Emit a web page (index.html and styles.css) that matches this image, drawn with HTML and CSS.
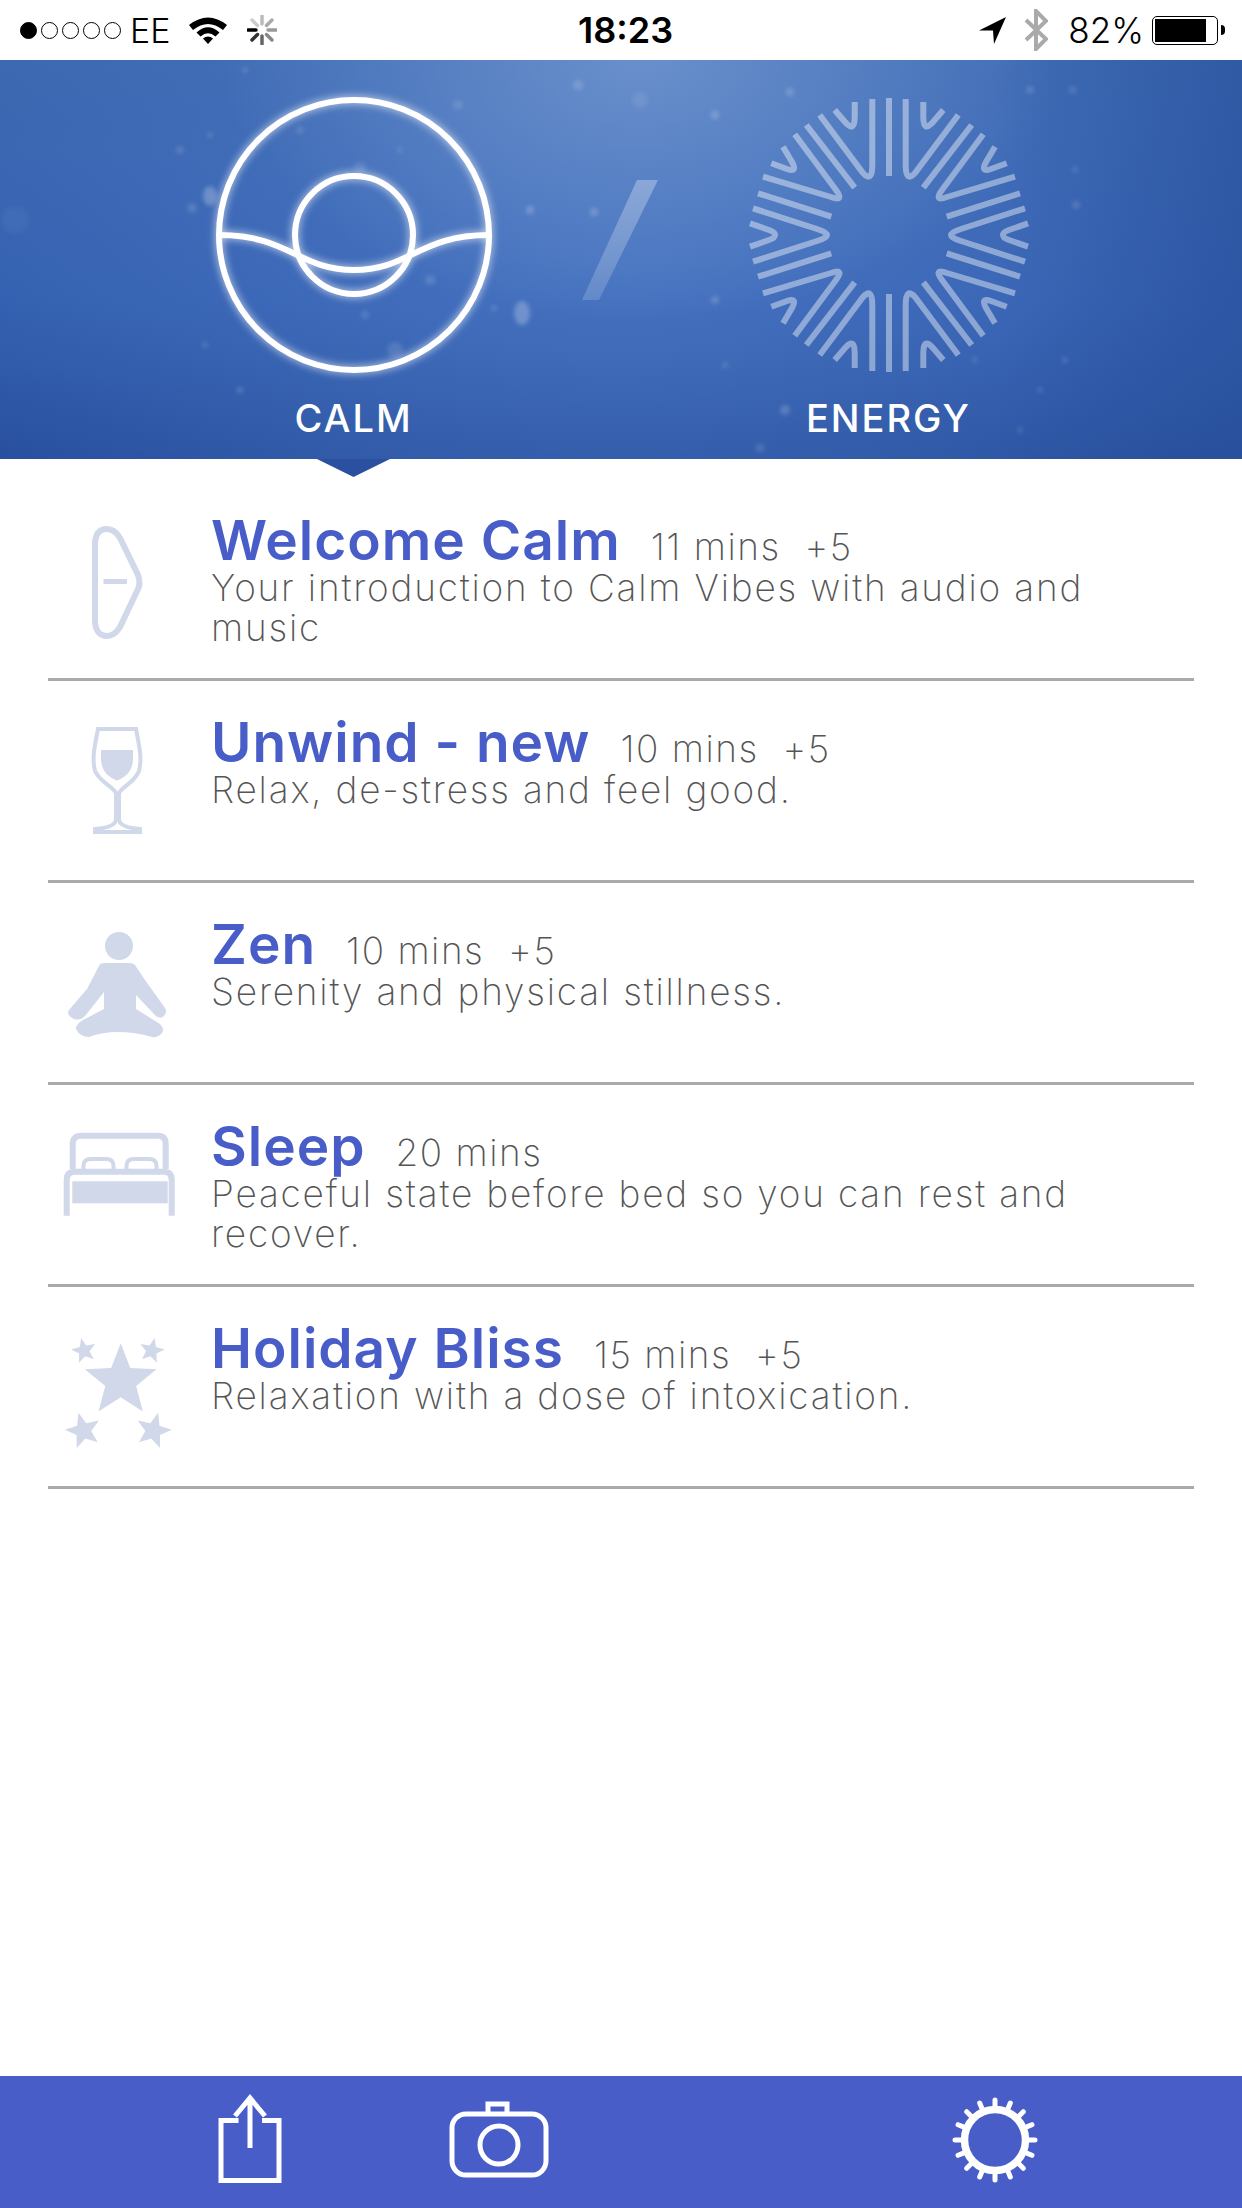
FILE: index.html
```html
<!DOCTYPE html>
<html lang="en">
<head>
    <meta charset="UTF-8">
    <title>Vibes</title>
    <link rel="stylesheet" href="styles.css">
</head>
<body>
<div class="page">
    <div class="status">
        <div class="status-left">
            <span class="dots"><i class="on"></i><i></i><i></i><i></i><i></i></span>
            <span class="carrier">EE</span>
            <svg class="wifi" width="38" height="28" viewBox="0 0 38 28">
                <path d="M0 9 Q19 -6 38 9 L34 14 Q19 2 4 14 Z" />
                <path d="M7.500 16.500 Q19 6 30.500 16.500 L26.500 20.500 Q19 14 11.500 20.500 Z" />
                <path d="M14 22.500 Q19 18.500 24 22.500 L19 28 Z" />
            </svg>
            <svg class="spinner" width="30" height="30" viewBox="-15 -15 30 30">
                <path d="M0 -14V-6" stroke="#bbb" />
                <path d="M10 -10L4.500 -4.500" stroke="#aaa" />
                <path d="M14 0H6" stroke="#999" />
                <path d="M10 10L4.500 4.500" stroke="#888" />
                <path d="M0 14V6" stroke="#666" />
                <path d="M-10 10L-4.500 4.500" stroke="#333" />
                <path d="M-14 0H-6" stroke="#000" />
                <path d="M-10 -10L-4.500 -4.500" stroke="#ccc" />
            </svg>
        </div>
        <div class="clock">18:23</div>
        <div class="status-right">
            <svg class="arrow-loc" width="28" height="27" viewBox="0 0 28 27"><path d="M27 0 L0 13.500 L14 13.500 L15 27 Z" /></svg>
            <svg class="bluetooth" width="24" height="42" viewBox="0 0 24 42"><path d="M2 11 L22 30 L12 40 V2 L22 12 L2 31" /></svg>
            <span class="percent">82%</span>
            <span class="battery"><span class="battery-fill"></span></span>
            <span class="battery-nub"></span>
        </div>
    </div>

    <header class="hero">
        <svg class="specks" width="1242" height="400" viewBox="0 0 1242 400">
            <g fill="#fff">
                <circle cx="180" cy="90" r="4" opacity=".14" /><circle cx="192" cy="148" r="5" opacity=".14" />
                <circle cx="210" cy="75" r="3" opacity=".14" /><circle cx="245" cy="10" r="3" opacity=".14" />
                <ellipse cx="210" cy="136" rx="7" ry="10" opacity=".25" /><circle cx="300" cy="70" r="4" opacity=".12" />
                <circle cx="360" cy="108" r="6" opacity=".12" /><circle cx="400" cy="90" r="3" opacity=".12" />
                <circle cx="205" cy="285" r="3" opacity=".14" /><circle cx="240" cy="330" r="3" opacity=".18" />
                <circle cx="270" cy="275" r="3" opacity=".14" /><circle cx="395" cy="290" r="8" opacity=".12" />
                <circle cx="365" cy="255" r="4" opacity=".12" /><circle cx="430" cy="220" r="5" opacity=".14" />
                <ellipse cx="522" cy="253" rx="8" ry="12" opacity=".25" />
                <circle cx="530" cy="150" r="4" opacity=".22" />
                <circle cx="494" cy="248" r="3" opacity=".14" /><circle cx="578" cy="25" r="5" opacity=".16" />
                <circle cx="458" cy="45" r="5" opacity=".12" /><circle cx="594" cy="152" r="4" opacity=".2" />
                <circle cx="640" cy="40" r="8" opacity=".08" /><circle cx="790" cy="32" r="4" opacity=".18" />
                <circle cx="715" cy="55" r="4" opacity=".2" /><circle cx="715" cy="240" r="4" opacity=".18" />
                <circle cx="725" cy="305" r="3" opacity=".14" />
                <circle cx="785" cy="350" r="5" opacity=".18" /><circle cx="760" cy="388" r="4" opacity=".14" />
                <circle cx="1030" cy="30" r="4" opacity=".14" /><circle cx="1073" cy="30" r="4" opacity=".12" />
                <circle cx="1075" cy="110" r="3" opacity=".14" /><circle cx="1076" cy="145" r="4" opacity=".14" />
                <circle cx="1065" cy="300" r="3" opacity=".14" /><circle cx="1040" cy="330" r="3" opacity=".12" />
                <circle cx="975" cy="300" r="3" opacity=".12" /><circle cx="1020" cy="370" r="3" opacity=".12" />
                <circle cx="15" cy="160" r="14" opacity=".04" />
            </g>
        </svg>
        <svg class="slash" width="80" height="124" viewBox="0 0 80 124">
            <defs>
                <linearGradient id="slash-fade" x1="0" y1="1" x2="0" y2="0">
                    <stop offset="0" stop-color="#fff" stop-opacity=".16" />
                    <stop offset="1" stop-color="#fff" stop-opacity=".3" />
                </linearGradient>
            </defs>
            <path d="M2 122 L57 2 H78 L19 122 Z" fill="url(#slash-fade)" />
        </svg>
        <div class="tab">
            <svg class="calm-icon" width="290" height="290" viewBox="-145 -145 290 290">
                <circle cx="0" cy="0" r="135" />
                <circle cx="0" cy="0" r="59" />
                <path d="M-135 0 C-65 0 -55 35 0 35 C55 35 65 0 135 0" />
            </svg>
            <div class="tab-label">CALM</div>
        </div>
        <div class="tab">
            <svg class="energy-icon" width="290" height="290" viewBox="-145 -145 290 290">
                <defs>
                    <g id="energy-part">
                        <path d="M-16.700 -136 V-70 Q-16.700 -52 -26 -62 L-69.300 -120" />
                        <path d="M-82.700 -110 L-34.300 -47.300" />
                        <path d="M-94.300 -100.700 L-53 -45 Q-44 -33 -58 -38 L-126 -58.300" />
                        <path d="M-34.300 -133 V-118 Q-34.300 -102 -44 -113 L-54.300 -125" />
                        <path d="M-106 -88.300 L-97 -73 Q-91 -62 -102 -66 L-117.700 -71.700" />
                        <path d="M-57.700 -18.300 L-131 -41.700" />
                        <path d="M-136 -26.700 L-72 -6 Q-62 -3 -62 0" />
                        <path d="M-139 -11.700 L-120 -5 Q-114 -3 -114 0" />
                    </g>
                </defs>
                <path d="M0 -137 V-59 M0 137 V59" />
                <use href="#energy-part" />
                <use href="#energy-part" transform="scale(-1 1)" />
                <use href="#energy-part" transform="scale(1 -1)" />
                <use href="#energy-part" transform="scale(-1 -1)" />
            </svg>
            <div class="tab-label">ENERGY</div>
        </div>
        <span class="pointer"></span>
    </header>

    <main class="list">
        <div class="row">
            <svg class="row-icon" width="130" height="120" viewBox="0 0 130 120">
                <path class="line" d="M45 20 C45 8 50 4 57 4 C63 4 67 8 70 13 L88 50 Q91 58 88 64 L70 102 C67 107 63 111 57 111 C50 111 45 106 45 95 Z" />
                <rect class="solid" x="53.500" y="54" width="23.500" height="5" />
            </svg>
            <div class="row-text">
                <div class="row-head"><span class="row-title">Welcome Calm</span><span class="row-meta">11 mins&nbsp; +5</span></div>
                <p class="row-desc">Your introduction to Calm Vibes with audio and music</p>
            </div>
        </div>
        <div class="row">
            <svg class="row-icon" width="130" height="120" viewBox="0 0 130 120">
                <path class="line thin" d="M48 2 H86 C90 22 92 32 89 44 C85 55 73 59 69 66 V92 C69 98 78 101 90 102 V105 H45 V102 C57 101 66 98 66 92 V66 C62 59 50 55 45 44 C42 32 44 22 48 2 Z" />
                <path class="solid" d="M51 23 H83 V31 C83 44 76 50 67 53.500 C58 50 51 44 51 31 Z" />
            </svg>
            <div class="row-text">
                <div class="row-head"><span class="row-title">Unwind - new</span><span class="row-meta">10 mins&nbsp; +5</span></div>
                <p class="row-desc">Relax, de-stress and feel good.</p>
            </div>
        </div>
        <div class="row">
            <svg class="row-icon" width="130" height="120" viewBox="0 0 130 120">
                <circle class="solid" cx="69" cy="17" r="14" />
                <path class="solid" d="M50 35 Q52 34 56 34 H79 Q83 34 85 36 L95 51 L115 79 Q118 84 113 88 Q108 90 104 85 L86 66 V80 L110 95 Q115 100 112 104 Q108 109 102 108 Q85 103 68 103 Q52 103 39 108 Q30 108 26 100 Q25 96 33 91 L54 80 V63 L35 87 Q30 92 24 90 Q16 86 19 81 L37 60 Z" />
            </svg>
            <div class="row-text">
                <div class="row-head"><span class="row-title">Zen</span><span class="row-meta">10 mins&nbsp; +5</span></div>
                <p class="row-desc">Serenity and physical stillness.</p>
            </div>
        </div>
        <div class="row">
            <svg class="row-icon" width="130" height="120" viewBox="0 0 130 120">
                <path class="line" d="M22.700 38 V13 Q22.700 4.700 31 4.700 H107.700 Q115.700 4.700 115.700 13 V38" />
                <path class="line thin" d="M33.500 38 V35 Q33.500 28 41 28 H56 Q63.500 28 63.500 35 V38 M76.500 38 V35 Q76.500 28 84 28 H99 Q106.500 28 106.500 35 V38" />
                <path class="line" d="M16.700 84.700 V49 Q16.700 40.700 25 40.700 H113.700 Q121.700 40.700 121.700 49 V84.700" />
                <rect class="solid" x="22.300" y="50.300" width="95.400" height="22" />
            </svg>
            <div class="row-text">
                <div class="row-head"><span class="row-title">Sleep</span><span class="row-meta">20 mins</span></div>
                <p class="row-desc">Peaceful state before bed so you can rest and recover.</p>
            </div>
        </div>
        <div class="row">
            <svg class="row-icon" width="130" height="120" viewBox="0 0 130 120">
                <defs>
                    <path id="star" d="M0 -10 L2.530 -3.480 L9.510 -3.090 L4.090 1.330 L5.880 8.090 L0 4.300 L-5.880 8.090 L-4.090 1.330 L-9.510 -3.090 L-2.530 -3.480 Z" />
                </defs>
                <use class="solid" href="#star" transform="translate(70.700 48) scale(3.770)" />
                <use class="solid" href="#star" transform="translate(34 17.700) rotate(-13) scale(1.300)" />
                <use class="solid" href="#star" transform="translate(101.700 17.700) rotate(13) scale(1.300)" />
                <use class="solid" href="#star" transform="translate(33.300 97.700) rotate(-15) scale(1.850)" />
                <use class="solid" href="#star" transform="translate(103.300 97.700) rotate(15) scale(1.850)" />
            </svg>
            <div class="row-text">
                <div class="row-head"><span class="row-title">Holiday Bliss</span><span class="row-meta">15 mins&nbsp; +5</span></div>
                <p class="row-desc">Relaxation with a dose of intoxication.</p>
            </div>
        </div>
    </main>

    <nav class="toolbar">
        <svg class="share" width="70" height="96" viewBox="0 0 70 96">
            <path d="M23.500 28.500 H6 V88.500 H64 V28.500 H47" />
            <path d="M35 56 V8 M20 24 L35 6 L50 24" />
        </svg>
        <svg class="camera" width="104" height="84" viewBox="0 0 104 84">
            <path d="M41 16 V6 H60 V16" />
            <rect x="5" y="16" width="94" height="61" rx="14" />
            <circle cx="52" cy="47" r="19" />
        </svg>
        <svg class="gear" width="90" height="90" viewBox="-45 -45 90 90">
            <defs>
                <path id="gear-tooth" d="M0 -40 V-33 M0 33 V40" />
            </defs>
            <circle class="gear-ring" cx="0" cy="0" r="30.500" />
            <g class="gear-teeth">
                <use href="#gear-tooth" />
                <use href="#gear-tooth" transform="rotate(22.500)" />
                <use href="#gear-tooth" transform="rotate(45)" />
                <use href="#gear-tooth" transform="rotate(67.500)" />
                <use href="#gear-tooth" transform="rotate(90)" />
                <use href="#gear-tooth" transform="rotate(112.500)" />
                <use href="#gear-tooth" transform="rotate(135)" />
                <use href="#gear-tooth" transform="rotate(157.500)" />
            </g>
        </svg>
    </nav>
</div>
</body>
</html>
```
FILE: styles.css
```css
* {
    box-sizing: border-box;
}

html, body {
    margin: 0;
    padding: 0;
    background: #fff;
}

.page {
    width: 1242px;
    height: 2208px;
    display: flex;
    flex-direction: column;
    overflow: hidden;
    font-family: Inter, "Noto Sans", sans-serif;
}

/* status bar */
.status {
    height: 60px;
    flex: none;
    display: grid;
    grid-template-columns: 1fr auto 1fr;
    align-items: center;
    padding: 0 17px 0 20px;
    color: #000;
}

.status-left, .status-right {
    display: flex;
    align-items: center;
}

.status-right {
    justify-content: flex-end;
}

.dots {
    display: flex;
    gap: 4px;
}

.dots i {
    width: 17px;
    height: 17px;
    border: 1.5px solid #000;
    border-radius: 50%;
}

.dots i.on {
    background: #000;
}

.carrier {
    font-size: 34px;
    font-weight: 300;
    margin-left: 9px;
}

.wifi {
    margin-left: 19px;
}

.spinner {
    margin-left: 20px;
    fill: none;
    stroke-width: 3.5;
    stroke-linecap: round;
}

.clock {
    font-size: 36px;
    font-weight: 600;
    margin-left: 6px;
}

.bluetooth {
    margin-left: 17px;
    fill: none;
    stroke: #aaa;
    stroke-width: 4;
}

.percent {
    font-size: 35px;
    font-weight: 300;
    margin-left: 20px;
}

.battery {
    width: 66px;
    height: 29px;
    margin-left: 8px;
    padding: 2px;
    border: 1.5px solid #000;
    border-radius: 5px;
}

.battery-fill {
    display: block;
    width: 51px;
    height: 100%;
    background: #000;
}

.battery-nub {
    width: 4px;
    height: 10px;
    margin-left: 3px;
    background: #000;
    border-radius: 0 4px 4px 0;
}

/* calm / energy header */
.hero {
    position: relative;
    height: 399px;
    flex: none;
    display: flex;
    justify-content: center;
    background:
        linear-gradient(90deg, rgba(40, 80, 155, 0) 80%, rgba(40, 80, 155, .6) 100%),
        radial-gradient(ellipse 420px 260px at 640px 0, rgba(130, 165, 215, .6), rgba(130, 165, 215, 0)),
        radial-gradient(ellipse 700px 400px at 620px 200px, rgba(85, 130, 205, .55), rgba(85, 130, 205, 0)),
        linear-gradient(180deg, #3d69b2 0, #335fb0 60%, #28509e 100%);
}

.specks {
    position: absolute;
    left: 0;
    top: 0;
    filter: blur(2px);
}

.slash {
    position: absolute;
    left: 580px;
    top: 118px;
}

.tab {
    position: relative;
    width: 535px;
    display: flex;
    flex-direction: column;
    align-items: center;
    padding-top: 30px;
}

.calm-icon {
    fill: none;
    stroke: #fff;
    stroke-width: 6;
    filter: drop-shadow(0 0 4px rgba(255, 255, 255, .8));
}

.energy-icon {
    fill: none;
    stroke: rgba(255, 255, 255, .42);
    stroke-width: 6;
    filter: blur(.5px);
}

.tab-label {
    margin-top: 15px;
    font-size: 38px;
    line-height: 46px;
    font-weight: 500;
    letter-spacing: 2px;
    color: #fff;
}

.pointer {
    position: absolute;
    left: 317px;
    top: 100%;
    width: 73px;
    height: 18px;
    background: #2a509f;
    clip-path: polygon(0 0, 100% 0, 50% 100%);
}

/* list */
.list {
    flex: 1;
    padding: 20px 48px 0;
}

.row {
    height: 202px;
    display: flex;
    align-items: flex-start;
    padding-top: 46px;
    border-bottom: 3px solid #aaa;
}

.row-icon {
    flex: none;
    margin-left: 2px;
}

.row-icon .line {
    fill: none;
    stroke: #d0d8ea;
    stroke-width: 6;
}

.row-icon .line.thin {
    stroke-width: 4;
}

.row-icon .solid {
    fill: #d0d8ea;
}

.row-text {
    margin-left: 31px;
    margin-top: -13px;
    width: 920px;
}

.row-head {
    display: flex;
    align-items: baseline;
    height: 56px;
}

.row-title {
    font-size: 55px;
    line-height: 56px;
    font-weight: 600;
    letter-spacing: 1px;
    color: #485dc8;
    margin-right: 30px;
}

.row-meta {
    font-size: 37px;
    line-height: 40px;
    font-weight: 200;
    letter-spacing: 1.5px;
    color: #555;
}

.row-desc {
    margin: 0;
    font-size: 37px;
    line-height: 40px;
    font-weight: 200;
    letter-spacing: 1.8px;
    color: #555;
}

/* bottom toolbar */
.toolbar {
    position: relative;
    height: 132px;
    flex: none;
    display: flex;
    align-items: flex-start;
    background: #485dc8;
}

.share, .camera, .gear {
    fill: none;
    stroke: #fff;
}

.share {
    margin-left: 215px;
    margin-top: 16px;
    stroke-width: 5;
}

.camera {
    margin-left: 162px;
    margin-top: 22px;
    stroke-width: 5;
}

.gear {
    margin-left: 399px;
    margin-top: 19px;
}

.gear-ring {
    stroke-width: 7.5;
}

.gear-teeth {
    stroke-width: 5;
    stroke-linecap: round;
}
```
